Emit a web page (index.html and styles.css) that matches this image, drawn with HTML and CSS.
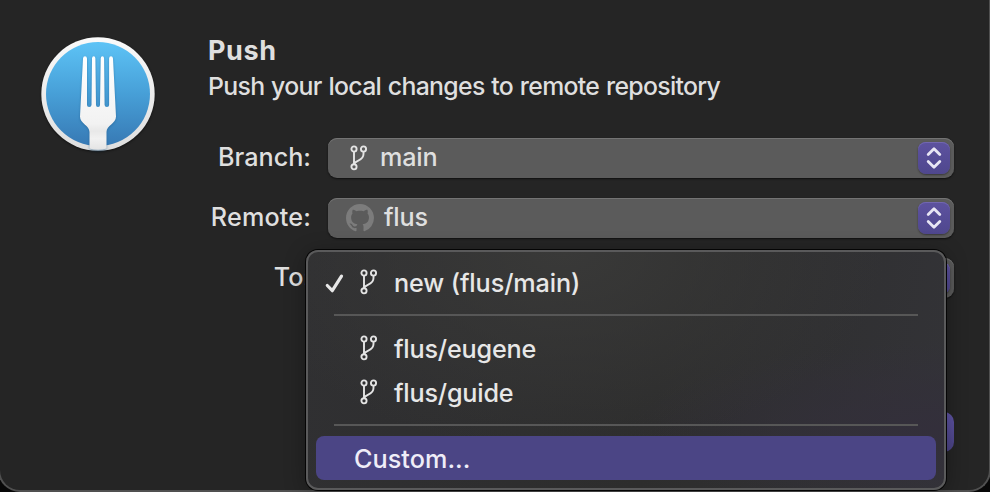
FILE: index.html
```html
<!DOCTYPE html>
<html lang="en">
<head>
<meta charset="utf-8">
<title>Push</title>
<link rel="stylesheet" href="styles.css">
</head>
<body>
<svg class="defs" aria-hidden="true">
  <symbol id="branch" viewBox="0 0 18 26">
    <g fill="none" stroke="currentColor" stroke-width="1.9">
      <circle cx="4" cy="4" r="2.6"/><circle cx="13.5" cy="4" r="2.6"/><circle cx="4" cy="21.8" r="2.6"/>
      <path d="M4 6.6V19.2M13.500 6.600V9C13.500 16.500 5.500 14.500 4.200 19"/>
    </g>
  </symbol>
  <symbol id="chevrons" viewBox="0 0 32 32">
    <path d="M10.2 12.600 16 6.800l5.800 5.800M10.200 19.500 16 25.300l5.800-5.800" fill="none" stroke="#e8e6f4" stroke-width="2.8" stroke-linecap="round" stroke-linejoin="round"/>
  </symbol>
</svg>
<main class="sheet">
  <svg class="logo" viewBox="0 0 120 120">
    <defs>
      <linearGradient id="sky" x1="0" y1="0" x2="0" y2="1"><stop offset="0" stop-color="#5dc3f6"/><stop offset=".5" stop-color="#479fd7"/><stop offset="1" stop-color="#3779b4"/></linearGradient>
      <linearGradient id="rim" x1="0" y1="0" x2="0" y2="1"><stop offset="0" stop-color="#fafafa"/><stop offset="1" stop-color="#dedede"/></linearGradient>
      <linearGradient id="steel" x1="0" y1="0" x2="0" y2="1"><stop offset="0" stop-color="#fff"/><stop offset=".72" stop-color="#f2f2f2"/><stop offset=".8" stop-color="#e8e8e8"/><stop offset=".88" stop-color="#f1f1f1"/><stop offset="1" stop-color="#e4e4e4"/></linearGradient>
    </defs>
    <circle cx="60" cy="60" r="56.7" fill="url(#rim)"/>
    <circle cx="60" cy="60" r="52" fill="url(#sky)"/>
    <path class="fork" fill="url(#steel)" d="M45 24.5Q45.200 22.300 47 22.300T49 24.500V71Q49 73 51.200 73T53.500 71L54 24.500Q54.100 22.300 55.700 22.300T57.400 24.500L58 71Q58 73 60 73T62 71L62.700 24.500Q62.800 22.300 64.400 22.300T66.100 24.500L66.600 71Q66.700 73 68.900 73T71.100 71V24.500Q71.200 22.300 73 22.300T75 24.500L78 82.500C78 90 68.500 91 68.500 98V114.500Q60 117 51.500 114.500V98C51.500 91 42 90 42 82.500Z"/>
  </svg>
  <section class="content">
    <h1 class="title">Push</h1>
    <p class="subtitle">Push your local changes to remote repository</p>
    <div class="form">
      <span class="label label-branch">Branch:</span>
      <div class="select">
        <svg class="branch"><use href="#branch"/></svg><span class="value-main">main</span>
        <svg class="stepper"><use href="#chevrons"/></svg>
      </div>
      <span class="label label-remote">Remote:</span>
      <div class="select">
        <svg class="github" viewBox="0 0 16 16"><path fill="currentColor" d="M8 0C3.580 0 0 3.580 0 8c0 3.540 2.290 6.530 5.470 7.590.4.070.55-.17.55-.38 0-.19-.01-.82-.01-1.490-2.010.37-2.530-.49-2.690-.94-.09-.23-.48-.94-.82-1.130-.28-.15-.68-.52-.01-.53.63-.01 1.080.58 1.230.82.72 1.210 1.870.87 2.330.66.070-.52.28-.87.51-1.070-1.780-.2-3.640-.89-3.640-3.950 0-.87.31-1.590.82-2.150-.08-.2-.36-1.020.08-2.120 0 0 .67-.21 2.200.82.64-.18 1.320-.27 2-.27s1.360.09 2 .27c1.530-1.040 2.200-.82 2.200-.82.44 1.100.16 1.920.08 2.120.51.56.82 1.270.82 2.150 0 3.070-1.870 3.750-3.650 3.950.29.25.54.73.54 1.480 0 1.070-.01 1.930-.01 2.200 0 .21.15.46.55.38A8.010 8.010 0 0 0 16 8c0-4.420-3.580-8-8-8z"/></svg><span class="value-flus">flus</span>
        <svg class="stepper"><use href="#chevrons"/></svg>
      </div>
      <span class="label label-to">To:</span>
      <div class="select"><svg class="stepper"><use href="#chevrons"/></svg></div>
    </div>
    <div class="actions"><button class="push" type="button" aria-label="Push"></button></div>
  </section>
</main>
<div class="menu" role="menu">
  <div class="item first" role="menuitem">
    <svg class="check" viewBox="0 0 22 22"><path d="M3.300 12.500 8.300 17.700 17.500 3.200" fill="none" stroke="currentColor" stroke-width="3.2" stroke-linecap="round" stroke-linejoin="round"/></svg>
    <svg class="branch"><use href="#branch"/></svg><span class="text-new">new (flus/main)</span>
  </div>
  <hr class="rule">
  <div class="item" role="menuitem"><svg class="branch"><use href="#branch"/></svg><span class="text-eugene">flus/eugene</span></div>
  <div class="item" role="menuitem"><svg class="branch"><use href="#branch"/></svg><span class="text-guide">flus/guide</span></div>
  <hr class="rule second">
  <div class="item selected" role="menuitem"><span class="text-custom">Custom...</span></div>
</div>
</body>
</html>
```
FILE: styles.css
```css
* { box-sizing: border-box; }
body {
  margin: 0;
  width: 990px;
  height: 492px;
  overflow: hidden;
  background: #080808;
  color: #dfdfdf;
  font: 450 25.2px/32px Inter, sans-serif;
  white-space: nowrap;
}
svg { display: block; flex: none; }
.defs { position: absolute; width: 0; height: 0; }
.sheet {
  display: flex;
  margin-left: -2px;
  width: 993px;
  height: 492px;
  padding: 34px 0 0 38px;
  background: #252525;
  border: solid #505050;
  border-width: 0 2px 2px;
  border-radius: 0 0 22px 22px;
}
.logo { width: 120px; height: 120px; filter: drop-shadow(0 1px 1px #0008); }
.fork { filter: drop-shadow(0 1px 1px #19568580); }
.content { width: 756px; margin-left: 40px; }
.title { margin: 0 0 0 10px; padding-top: 1px; font-size: 27px; line-height: 32px; font-weight: 750; letter-spacing: .6px; }
.subtitle { margin: 3px 0 0 10px; font-size: 24.8px; line-height: 32px; letter-spacing: -.68px; word-spacing: .8px; }
.form {
  display: grid;
  grid-template-columns: 114px 626px;
  grid-auto-rows: 40px;
  gap: 20px 16px;
  margin-top: 36px;
}
.label { padding-right: 1px; line-height: 38px; text-align: right; letter-spacing: 0; }
.label-remote { letter-spacing: .15px; }
.select {
  display: flex;
  align-items: center;
  height: 40px;
  padding: 0 4px 0 18px;
  border-radius: 9px;
  background: #5b5b5b;
  box-shadow: inset 0 1px #747474, 0 1px 2px #0009;
}
.select span { margin-top: -2px; letter-spacing: -.2px; }
.branch { width: 18px; height: 26px; color: #e4e4e4; }
.select .branch { margin: 0 12px 0 4px; }
.github { width: 28px; height: 28px; margin-right: 10px; color: #7c7c7c; }
.stepper {
  width: 32px;
  height: 32px;
  margin-left: auto;
  border-radius: 8px;
  background: linear-gradient(#5d529f, #4f478e);
  box-shadow: inset 0 1px #7267b0, 0 1px 2px #0006;
}
.actions { display: flex; justify-content: flex-end; margin-top: 114px; }
.push {
  width: 140px;
  height: 40px;
  border: 0;
  border-radius: 10px;
  background: linear-gradient(#5f54a5, #4b4385);
}
.menu {
  position: absolute;
  left: 306px;
  top: 250px;
  width: 640px;
  height: 240px;
  padding: 9px 8px;
  border: 2px solid #5a5a5b;
  border-radius: 12px;
  background: radial-gradient(ellipse at 40% 0, #393938, transparent 60%), radial-gradient(ellipse at 100% 75%, #332f3b, transparent 35%), linear-gradient(100deg, #303032, #2d2d2d 55%, #333337);
  box-shadow: 0 0 0 1px #050505, 0 4px 22px #0005;
  color: #e7e7e7;
}
.item { display: flex; align-items: center; height: 44px; padding-left: 44px; border-radius: 8px; }
.item .branch { margin: -2px 16px 0 0; }
.item span { letter-spacing: -.2px; }
.item .text-new { letter-spacing: -.1px; }
.item.first { padding-left: 8px; }
.check { width: 22px; height: 22px; margin: 1px 14px 0 0; }
.rule { height: 2px; margin: 9px 18px 11px; border: 0; background: #575757; }
.rule.second { margin: 9px 18px 10px; }
.item.selected { padding-left: 38px; background: #4b4585; color: #efedf8; }
.item .text-custom { margin-top: 1px; letter-spacing: .05px; }
```
